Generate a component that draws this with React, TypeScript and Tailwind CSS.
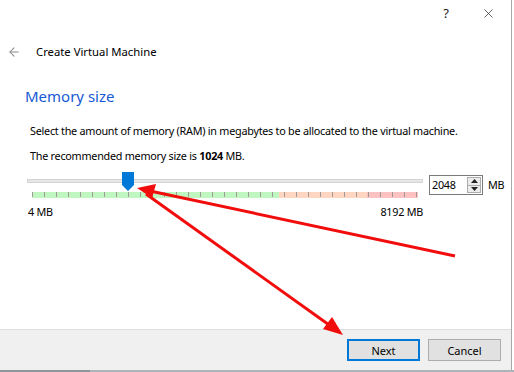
import {X, ArrowLeft} from "lucide-react";

const ticks = Array.from({length: 33}, (_, i) => i)

const Slider = () => {
    return (
        <div className="w-[396px]">
            <div className="relative h-[18px]">
                <div className="absolute left-0 right-0 top-[7px] h-[4px] bg-[#e7e7e7] border border-[#d4d4d4]" />
                <svg className="absolute left-[95px] top-0" width="12" height="19" viewBox="0 0 12 19">
                    <path d="M0 0H12V13L6 19L0 13Z" fill="#0078d7" />
                </svg>
            </div>
            <div className="relative ml-[5px] mt-[2px] w-[386px] h-[6px] flex">
                <div className="w-[247px] bg-[#c0f7c0]" />
                <div className="w-[88px] bg-[#ffd6c2]" />
                <div className="w-[51px] bg-[#ffc2c2]" />
                <div className="absolute inset-0 flex">
                    {ticks.map(t => (
                        <span key={t} className="w-[12px] h-[5px] shrink-0 border-l border-[#a09a96]" />
                    ))}
                </div>
            </div>
            <div className="mt-[6px] h-[16px] flex justify-between items-center text-[10.8px] tracking-[-0.25px] leading-none pl-[1px]">
                <span>4 MB</span>
                <span>8192 MB</span>
            </div>
        </div>
    )
}

const SpinBox = () => {
    return (
        <div className="mt-[3px] ml-[6px] w-[54px] h-[20px] border border-[#7a7a7a] bg-white flex items-center justify-between pl-[2px] pr-[1px]">
            <span className="text-[10.8px] tracking-[-0.25px] leading-none">2048</span>
            <div className="w-[14px] h-[16px] border border-[#adadad] bg-[#ececec] flex flex-col">
                <div className="flex-1 flex items-center justify-center border-b border-[#adadad]">
                    <svg width="7" height="4" viewBox="0 0 7 4"><path d="M0 4L3.5 0L7 4Z" fill="#222" /></svg>
                </div>
                <div className="flex-1 flex items-center justify-center">
                    <svg width="7" height="4" viewBox="0 0 7 4"><path d="M0 0L3.5 4L7 0Z" fill="#222" /></svg>
                </div>
            </div>
        </div>
    )
}

// red annotation arrows drawn over the dialog
const Arrows = () => {
    return (
        <svg className="absolute inset-0 pointer-events-none" width="514" height="372" viewBox="0 0 514 372">
            <line x1="455" y1="256" x2="150" y2="191" stroke="#f20d0d" strokeWidth="3" />
            <path d="M137 188L156 184L152 198Z" fill="#f20d0d" />
            <line x1="146" y1="194" x2="332" y2="327" stroke="#f20d0d" strokeWidth="3" />
            <path d="M343 335L323 329L332 317Z" fill="#f20d0d" />
        </svg>
    )
}

const App = () => {
    return (
        <div className="relative w-[514px] h-[372px] bg-white overflow-hidden font-['Noto_Sans',sans-serif] text-black">
            <div className="w-[512px] h-[370px] border-r border-[#a8a8a8] flex flex-col">
                <div className="h-[26px] flex items-center justify-end pr-[15px] gap-[32px]">
                    <span className="text-[13px] leading-none text-[#222]">?</span>
                    <X size={15} strokeWidth={1.1} className="text-[#222]" />
                </div>

                <div className="h-[52px] flex items-center pl-[7px]">
                    <ArrowLeft size={14} strokeWidth={1.8} className="text-[#8a8a8a]" />
                    <span className="ml-[15px] text-[11.3px] leading-none whitespace-nowrap">Create Virtual Machine</span>
                </div>

                <div className="flex-1 flex flex-col">
                    <h2 className="h-[36px] flex items-center pl-[25px] text-[15px] text-[#1759d4] leading-none">Memory size</h2>
                    <p className="mt-[6px] h-[22px] flex items-center pl-[30px] text-[10.8px] tracking-[-0.25px] leading-none whitespace-nowrap">
                        Select the amount of memory (RAM) in megabytes to be allocated to the virtual machine.
                    </p>
                    <p className="mt-[3px] h-[22px] flex items-center pl-[30px] text-[10.8px] tracking-[-0.25px] leading-none whitespace-pre">
                        The recommended memory size is <b className="font-bold">1024</b> MB.
                    </p>

                    <div className="mt-[5px] pl-[27px] flex items-start">
                        <Slider />
                        <SpinBox />
                        <span className="ml-[5px] mt-[8px] text-[10.8px] tracking-[-0.25px] leading-none">MB</span>
                    </div>
                </div>

                <div className="h-[41px] bg-[#f0f0f0] border-t border-[#dfdfdf] flex items-center justify-end pr-[10px] gap-[8px]">
                    <button className="w-[73px] h-[22px] bg-[#e1e1e1] border-2 border-[#0078d7] text-[11px] leading-none">Next</button>
                    <button className="w-[73px] h-[22px] bg-[#e1e1e1] border border-[#adadad] text-[11px] leading-none">Cancel</button>
                </div>
            </div>
            <div className="h-[2px] flex">
                <div className="w-[90px] bg-[#8c969d]" />
                <div className="flex-1 bg-[#aab4bb]" />
            </div>

            <Arrows />
        </div>
    )
}
export default App
